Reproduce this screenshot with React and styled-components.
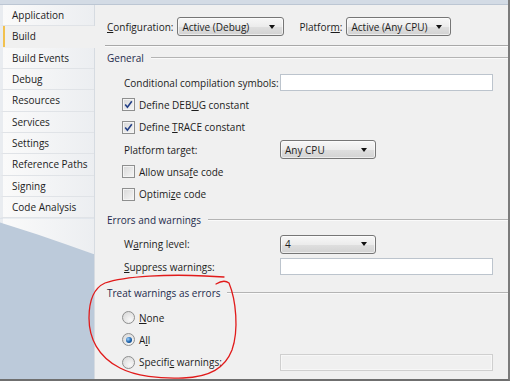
import React from 'react';
import styled, { createGlobalStyle } from 'styled-components';

const Global = createGlobalStyle`
  html, body { margin: 0; padding: 0; background: #fff; }
  body { font-family: "Open Sans", "Noto Sans", sans-serif; font-size: 10px; color: #1c1c1c; }
  #root { width: 512px; height: 383px; }
`;

const Frame = styled.div`
  position: relative;
  width: 512px;
  height: 383px;
  background: #fff;
  overflow: hidden;
`;

const Window = styled.div`
  width: 510px;
  height: 381px;
  box-sizing: border-box;
  border-right: 2px solid #7b7b7b;
  border-bottom: 2px solid #6f6f6f;
  display: flex;
  flex-direction: column;
`;

const TopBand = styled.div`
  flex: none;
  height: 4px;
  background: #d3dbe5;
  border-bottom: 1px solid #bcc6d3;
`;

const Body = styled.div`
  flex: 1;
  display: flex;
  min-height: 0;
`;

const Sidebar = styled.div`
  flex: none;
  width: 94px;
  background: #bccada;
  display: flex;
  flex-direction: column;
`;

const Tab = styled.div`
  position: relative;
  z-index: ${p => (p.$active ? 1 : 0)};
  width: ${p => (p.$active ? 'calc(100% + 1px)' : '100%')};
  height: 21.33px;
  box-sizing: border-box;
  display: flex;
  align-items: center;
  padding-left: 9px;
  border-left: 3px solid #e9ecf0;
  background: ${p => (p.$active ? '#f0f0f0' : 'linear-gradient(to right, #fafafa, #eceef1)')};
  border-bottom: 1px solid ${p => (p.$active ? '#f0f0f0' : '#e0e3e7')};
  box-shadow: ${p => (p.$active ? 'inset 2px 0 0 #f2c14e' : 'none')};
  white-space: nowrap;
`;

const TabTail = styled.div`
  height: 36px;
  box-sizing: border-box;
  border-left: 3px solid #e9ecf0;
  background: linear-gradient(to right, #fafafa, #eceef1);
  clip-path: polygon(0 0, 100% 0, 100% 100%, 70% 72%, 40% 45%, 0 12%);
`;

const Content = styled.div`
  flex: 1;
  background: #f0f0f0;
  border-left: 1px solid #d6dbe1;
  padding: 12px 0 0 12px;
  display: flex;
  flex-direction: column;
  min-width: 0;
`;

const ConfigRow = styled.div`
  display: flex;
  align-items: center;
  height: 19px;
`;

const ConfigLabel = styled.span`
  margin-left: ${p => p.$indent || 0}px;
  margin-right: 4px;
  white-space: nowrap;
`;

const Select = styled.div`
  width: ${p => p.$w}px;
  height: 19px;
  box-sizing: border-box;
  border: 1px solid #767676;
  border-radius: 3px;
  background: linear-gradient(#f7f7f7, #ececec 50%, #dfdfdf 51%, #d2d2d2);
  box-shadow: inset 0 0 0 1px rgba(255,255,255,0.6);
  display: flex;
  align-items: center;
  justify-content: space-between;
  padding: 0 8px 0 4px;
  white-space: nowrap;
  &::after {
    content: "";
    width: 0;
    height: 0;
    border-left: 3.5px solid transparent;
    border-right: 3.5px solid transparent;
    border-top: 4px solid #111;
  }
`;

const Separator = styled.div`
  margin: 9px 0 0 -2px;
  height: 0;
  border-top: 1px solid #a8a8a8;
  border-bottom: 1px solid #fbfbfb;
`;

const Group = styled.div`
  margin-top: ${p => p.$top}px;
  display: flex;
  flex-direction: column;
`;

const GroupHeader = styled.div`
  height: 14px;
  display: flex;
  align-items: center;
  color: #1e2b4d;
  white-space: nowrap;
  &::after {
    content: "";
    flex: 1;
    height: 0;
    border-top: 1px solid #b4b4b4;
    border-bottom: 1px solid #fafafa;
    margin-left: 7px;
  }
`;

const GroupBody = styled.div`
  margin-top: 6.5px;
  display: flex;
  flex-direction: column;
`;

const Row = styled.div`
  height: 22.3px;
  display: flex;
  align-items: center;
  padding-left: 15px;
  white-space: nowrap;
`;

const Label = styled.span`
  width: 158px;
  box-sizing: border-box;
  padding-left: 2px;
  flex: none;
`;

const OptionLabel = styled.span`
  width: 158px;
  flex: none;
  display: flex;
  align-items: center;
`;

const Text = styled.span`
  white-space: pre;
`;

const Key = styled.span`
  text-decoration: underline;
  text-underline-offset: 1px;
`;

const TextBox = styled.div`
  width: 213px;
  height: 17px;
  box-sizing: border-box;
  border: 1px solid ${p => (p.$disabled ? '#cfcfcf' : '#bcc4cd')};
  background: ${p => (p.$disabled ? '#f0f0f0' : '#ffffff')};
  box-shadow: ${p => (p.$disabled ? 'inset 0 0 0 1px #f7f7f7' : 'none')};
`;

const Box = styled.span`
  flex: none;
  width: 13px;
  height: 13px;
  box-sizing: border-box;
  border: 1px solid #8e8f8f;
  background: linear-gradient(135deg, #d8d8d8, #f6f6f6);
  box-shadow: inset 0 0 0 1px #f4f4f4;
  margin-right: 4px;
  display: flex;
  align-items: center;
  justify-content: center;
`;

const Radio = styled.span`
  flex: none;
  width: 13px;
  height: 13px;
  box-sizing: border-box;
  border-radius: 50%;
  border: 1px solid #8e8f8f;
  background: radial-gradient(circle at 65% 70%, #f8f8f8, #d4d4d4);
  margin-right: 4px;
  display: flex;
  align-items: center;
  justify-content: center;
  &::after {
    content: "";
    display: ${p => (p.$on ? 'block' : 'none')};
    width: 6px;
    height: 6px;
    border-radius: 50%;
    background: radial-gradient(circle at 35% 35%, #9fd3ff, #1a5fa8 55%, #0b3d78);
  }
`;

const Check = ({ on }) => (
  <Box>
    {on && (
      <svg width="9" height="9" viewBox="0 0 9 9">
        <path d="M1.2 4.6 L3.4 7.2 L7.8 1.2" fill="none" stroke="#233f86" strokeWidth="1.6" />
      </svg>
    )}
  </Box>
);

const Overlay = styled.svg`
  position: absolute;
  left: 0;
  top: 0;
  pointer-events: none;
`;

const tabs = [
  'Application', 'Build', 'Build Events', 'Debug', 'Resources', 'Services',
  'Settings', 'Reference Paths', 'Signing', 'Code Analysis',
];

export default function App() {
  return (
    <>
      <Global />
      <Frame>
        <Window>
          <TopBand />
          <Body>
            <Sidebar>
              {tabs.map(t => (
                <Tab key={t} $active={t === 'Build'}>{t}</Tab>
              ))}
              <TabTail />
            </Sidebar>
            <Content>
              <ConfigRow>
                <ConfigLabel><Key>C</Key>onfiguration:</ConfigLabel>
                <Select $w={107}>Active (Debug)</Select>
                <ConfigLabel $indent={15}>Platfor<Key>m</Key>:</ConfigLabel>
                <Select $w={105}>Active (Any CPU)</Select>
              </ConfigRow>
              <Separator />
              <Group $top={4}>
                <GroupHeader>General</GroupHeader>
                <GroupBody>
                  <Row>
                    <Label>Conditional compilation symbols:</Label>
                    <TextBox />
                  </Row>
                  <Row><Check on /><Text>Define DEB<Key>U</Key>G constant</Text></Row>
                  <Row><Check on /><Text>Define <Key>T</Key>RACE constant</Text></Row>
                  <Row>
                    <Label>Platform target:</Label>
                    <Select $w={96}>Any CPU</Select>
                  </Row>
                  <Row><Check /><Text>Allow unsa<Key>f</Key>e code</Text></Row>
                  <Row><Check /><Text>Optimi<Key>z</Key>e code</Text></Row>
                </GroupBody>
              </Group>
              <Group $top={7.5}>
                <GroupHeader>Errors and warnings</GroupHeader>
                <GroupBody>
                  <Row>
                    <Label>W<Key>a</Key>rning level:</Label>
                    <Select $w={96}>4</Select>
                  </Row>
                  <Row>
                    <Label><Key>S</Key>uppress warnings:</Label>
                    <TextBox />
                  </Row>
                </GroupBody>
              </Group>
              <Group $top={8}>
                <GroupHeader>Treat warnings as errors</GroupHeader>
                <GroupBody>
                  <Row><Radio /><Text><Key>N</Key>one</Text></Row>
                  <Row><Radio $on /><Text>A<Key>l</Key>l</Text></Row>
                  <Row>
                    <OptionLabel>
                      <Radio /><Text>Specifi<Key>c</Key> warnings:</Text>
                    </OptionLabel>
                    <TextBox $disabled />
                  </Row>
                </GroupBody>
              </Group>
            </Content>
          </Body>
        </Window>
        <Overlay width="512" height="383" viewBox="0 0 512 383">
          <path
            d="M216 284 Q224 279 229 283 C236 300 239 330 232 350 C225 368 210 377 183 378 C160 379 135 376 120 368 C98 357 89 338 89 318 C89 300 94 288 105 283 C125 276 170 274 205 276 L224 277"
            fill="none"
            stroke="#e11b1b"
            strokeWidth="1.3"
            strokeLinecap="round"
          />
        </Overlay>
      </Frame>
    </>
  );
}
